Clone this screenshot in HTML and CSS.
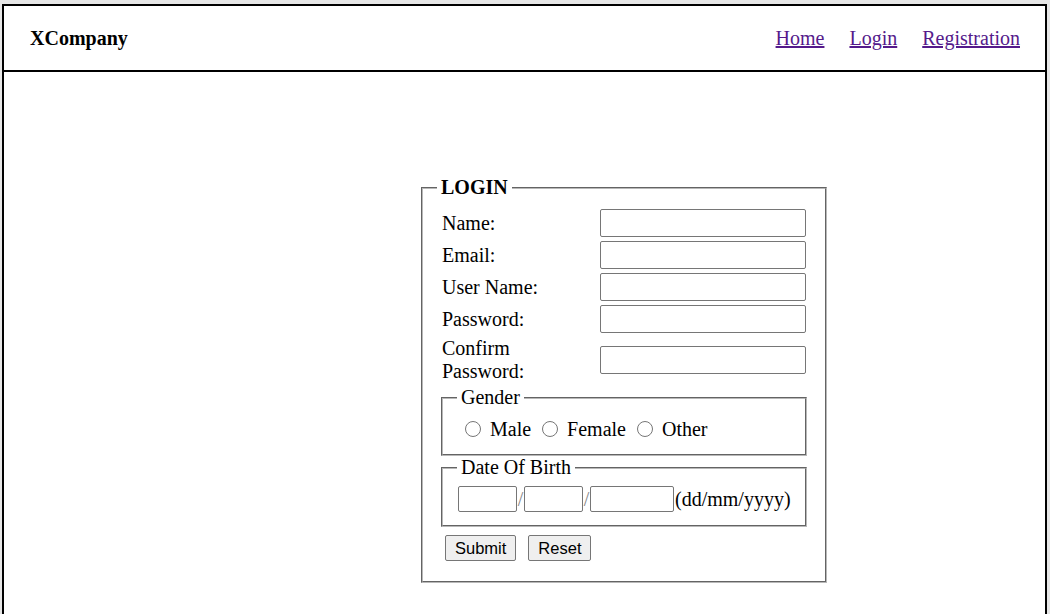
FILE: index.html
```html
<!DOCTYPE html>
<html>
<head>
<meta charset="utf-8">
<title>XCompany - Login</title>
<link rel="stylesheet" href="styles.css">
</head>
<body>
<div class="page">
  <header class="topbar">
    <div class="brand">XCompany</div>
    <nav class="nav">
      <a href="#">Home</a>
      <a href="#">Login</a>
      <a href="#">Registration</a>
    </nav>
  </header>
  <main class="main">
    <form class="form">
      <fieldset class="box">
        <legend class="box-title">LOGIN</legend>
        <div class="fields">
          <label class="lbl">Name:</label><input class="txt" type="text">
          <label class="lbl">Email:</label><input class="txt" type="text">
          <label class="lbl">User Name:</label><input class="txt" type="text">
          <label class="lbl">Password:</label><input class="txt" type="password">
          <label class="lbl">Confirm Password:</label><input class="txt" type="password">
        </div>
        <fieldset class="sub sub-gender">
          <legend class="sub-title">Gender</legend>
          <div class="radios">
            <label class="opt"><input class="rad" type="radio" name="g">Male</label>
            <label class="opt"><input class="rad" type="radio" name="g">Female</label>
            <label class="opt"><input class="rad" type="radio" name="g">Other</label>
          </div>
        </fieldset>
        <fieldset class="sub sub-dob">
          <legend class="sub-title">Date Of Birth</legend>
          <div class="dob">
            <input class="d d-first" type="text"><span class="sep">/</span><input class="d" type="text"><span class="sep">/</span><input class="d d-year" type="text"><span class="hint">(dd/mm/yyyy)</span>
          </div>
        </fieldset>
        <div class="actions">
          <button class="btn" type="button">Submit</button>
          <button class="btn" type="reset">Reset</button>
        </div>
      </fieldset>
    </form>
  </main>
</div>
</body>
</html>
```
FILE: styles.css
```css
html, body {
  margin: 0;
  padding: 0;
}
body {
  background: #e6e6e6;
  font-family: "Liberation Serif", "Times New Roman", serif;
  font-size: 20px;
  color: #000;
  overflow: hidden;
}
.page {
  margin: 4px 3px 0 2px;
  border: 2px solid #000;
  border-bottom: none;
  background: #fff;
  height: 610px;
  box-sizing: border-box;
}
.topbar {
  height: 64px;
  display: flex;
  align-items: center;
  justify-content: space-between;
  padding: 0 25px 0 26px;
  border-bottom: 2px solid #000;
}
.brand {
  font-weight: bold;
}
.nav {
  display: flex;
  gap: 25px;
}
.nav a {
  color: #551a8b;
  text-decoration: underline;
}
.main {
  padding: 104px 0 0 417px;
}
.form {
  margin: 0;
}
.box {
  width: 406px;
  box-sizing: border-box;
  margin: 0;
  border: 2px groove #b8b8b8;
  padding: 10px 14px 20px 14px;
}
.box-title {
  padding: 0 4px;
  font-weight: bold;
}
.fields {
  display: grid;
  grid-template-columns: 163px 206px;
  row-gap: 4px;
  align-items: center;
}
.lbl {
  padding-left: 5px;
  padding-right: 10px;
  line-height: 23px;
}
.txt {
  width: 206px;
  height: 28px;
  box-sizing: border-box;
  border: 1px solid #767676;
  border-radius: 2px;
  padding: 1px 2px;
  margin: 0;
  font-size: 16px;
  background: #fff;
}
.sub {
  width: 366px;
  box-sizing: border-box;
  margin: 3px 0 0 4px;
  border: 2px groove #b8b8b8;
  padding: 8px 14px 13px 14px;
}
.sub-dob {
  margin-top: 0;
}
.sub-title {
  padding: 0 4px;
}
.radios {
  display: flex;
  align-items: center;
  height: 24px;
  margin-left: -3px;
}
.opt {
  display: inline-flex;
  align-items: center;
}
.rad {
  width: 16px;
  height: 16px;
  margin: 0 9px 0 11px;
}
.dob {
  display: flex;
  align-items: center;
  height: 26px;
  margin-top: -1px;
}
.d {
  width: 59px;
  height: 26px;
  box-sizing: border-box;
  border: 1px solid #767676;
  border-radius: 2px;
  margin: 0;
  padding: 1px 2px;
  font-size: 16px;
  background: #fff;
}
.d-first {
  margin-left: 1px;
}
.d-year {
  width: 84px;
}
.sep {
  color: #888;
  width: 7px;
  text-align: center;
}
.hint {
  margin-left: 1px;
}
.actions {
  display: flex;
  gap: 12px;
  margin-top: 8px;
  padding-left: 8px;
}
.btn {
  font-family: "Liberation Sans", Arial, sans-serif;
  font-size: 16.5px;
  height: 26px;
  padding: 0 9px;
  border: 1px solid #767676;
  border-radius: 2px;
  background: #efefef;
  color: #000;
  margin: 0;
}
```
